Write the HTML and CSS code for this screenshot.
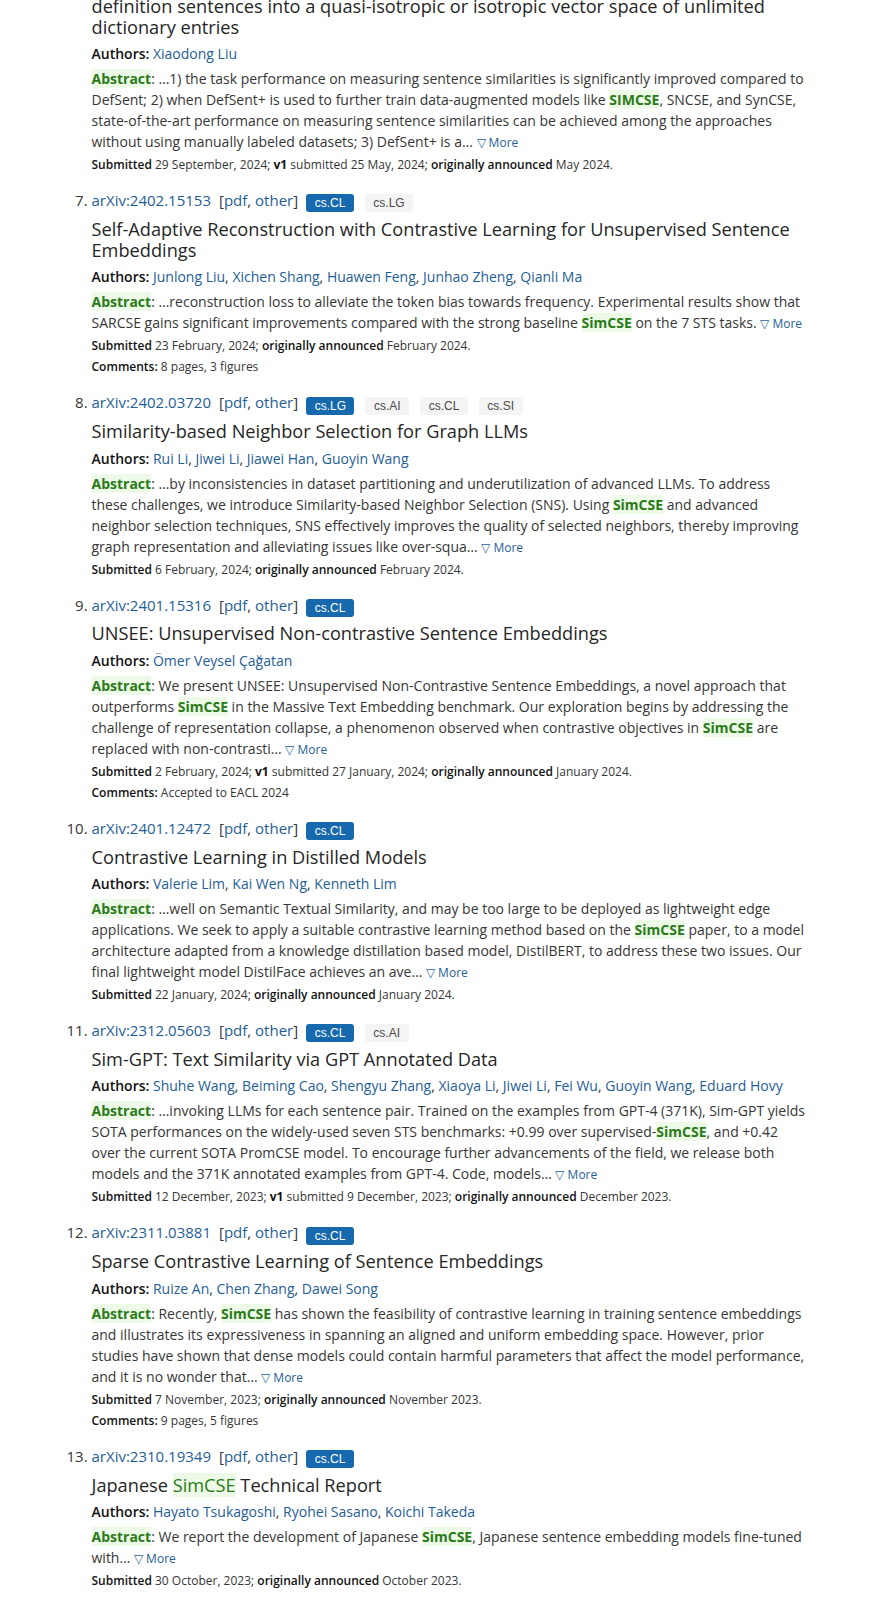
FILE: index.html
```html
<!DOCTYPE html>
<html lang="en">
<head>
<meta charset="utf-8">
<title>arXiv search results</title>
<link rel="stylesheet" href="styles.css">
</head>
<body>
<ol class="results">
  <li class="result continued" value="6">
    <p class="title first-cut">definition sentences into a quasi-isotropic or isotropic vector space of unlimited dictionary entries</p>
    <p class="authors"><span class="label">Authors:</span> <a href="#">Xiaodong Liu</a></p>
    <p class="abstract"><span class="hit">Abstract</span>: …1) the task performance on measuring sentence similarities is significantly improved compared to DefSent; 2) when DefSent+ is used to further train data-augmented models like <span class="hit">SIMCSE</span>, SNCSE, and SynCSE, state-of-the-art performance on measuring sentence similarities can be achieved among the approaches without using manually labeled datasets; 3) DefSent+ is a… <a class="more" href="#">▽ More</a></p>
    <p class="meta"><span class="label">Submitted</span> 29 September, 2024; <span class="label strong">v1</span> submitted 25 May, 2024; <span class="label">originally announced</span> May 2024.</p>
  </li>

  <li class="result" value="7">
    <p class="list-title"><a href="#">arXiv:2402.15153</a><span class="links">[<a href="#">pdf</a>, <a href="#">other</a>]</span><span class="tags"><span class="tag primary">cs.CL</span><span class="tag">cs.LG</span></span></p>
    <p class="title">Self-Adaptive Reconstruction with Contrastive Learning for Unsupervised Sentence Embeddings</p>
    <p class="authors"><span class="label">Authors:</span> <a href="#">Junlong Liu</a>, <a href="#">Xichen Shang</a>, <a href="#">Huawen Feng</a>, <a href="#">Junhao Zheng</a>, <a href="#">Qianli Ma</a></p>
    <p class="abstract"><span class="hit">Abstract</span>: …reconstruction loss to alleviate the token bias towards frequency. Experimental results show that SARCSE gains significant improvements compared with the strong baseline <span class="hit">SimCSE</span> on the 7 STS tasks. <a class="more" href="#">▽ More</a></p>
    <p class="meta"><span class="label">Submitted</span> 23 February, 2024; <span class="label">originally announced</span> February 2024.</p>
    <p class="meta"><span class="label">Comments:</span> 8 pages, 3 figures</p>
  </li>

  <li class="result" value="8">
    <p class="list-title"><a href="#">arXiv:2402.03720</a><span class="links">[<a href="#">pdf</a>, <a href="#">other</a>]</span><span class="tags"><span class="tag primary">cs.LG</span><span class="tag">cs.AI</span><span class="tag">cs.CL</span><span class="tag">cs.SI</span></span></p>
    <p class="title">Similarity-based Neighbor Selection for Graph LLMs</p>
    <p class="authors"><span class="label">Authors:</span> <a href="#">Rui Li</a>, <a href="#">Jiwei Li</a>, <a href="#">Jiawei Han</a>, <a href="#">Guoyin Wang</a></p>
    <p class="abstract"><span class="hit">Abstract</span>: …by inconsistencies in dataset partitioning and underutilization of advanced LLMs. To address these challenges, we introduce Similarity-based Neighbor Selection (SNS). Using <span class="hit">SimCSE</span> and advanced neighbor selection techniques, SNS effectively improves the quality of selected neighbors, thereby improving graph representation and alleviating issues like over-squa… <a class="more" href="#">▽ More</a></p>
    <p class="meta"><span class="label">Submitted</span> 6 February, 2024; <span class="label">originally announced</span> February 2024.</p>
  </li>

  <li class="result" value="9">
    <p class="list-title"><a href="#">arXiv:2401.15316</a><span class="links">[<a href="#">pdf</a>, <a href="#">other</a>]</span><span class="tags"><span class="tag primary">cs.CL</span></span></p>
    <p class="title">UNSEE: Unsupervised Non-contrastive Sentence Embeddings</p>
    <p class="authors"><span class="label">Authors:</span> <a href="#">Ömer Veysel Çağatan</a></p>
    <p class="abstract"><span class="hit">Abstract</span>: We present UNSEE: Unsupervised Non-Contrastive Sentence Embeddings, a novel approach that outperforms <span class="hit">SimCSE</span> in the Massive Text Embedding benchmark. Our exploration begins by addressing the challenge of representation collapse, a phenomenon observed when contrastive objectives in <span class="hit">SimCSE</span> are replaced with non-contrasti… <a class="more" href="#">▽ More</a></p>
    <p class="meta"><span class="label">Submitted</span> 2 February, 2024; <span class="label strong">v1</span> submitted 27 January, 2024; <span class="label">originally announced</span> January 2024.</p>
    <p class="meta"><span class="label">Comments:</span> Accepted to EACL 2024</p>
  </li>

  <li class="result" value="10">
    <p class="list-title"><a href="#">arXiv:2401.12472</a><span class="links">[<a href="#">pdf</a>, <a href="#">other</a>]</span><span class="tags"><span class="tag primary">cs.CL</span></span></p>
    <p class="title">Contrastive Learning in Distilled Models</p>
    <p class="authors"><span class="label">Authors:</span> <a href="#">Valerie Lim</a>, <a href="#">Kai Wen Ng</a>, <a href="#">Kenneth Lim</a></p>
    <p class="abstract"><span class="hit">Abstract</span>: …well on Semantic Textual Similarity, and may be too large to be deployed as lightweight edge applications. We seek to apply a suitable contrastive learning method based on the <span class="hit">SimCSE</span> paper, to a model architecture adapted from a knowledge distillation based model, DistilBERT, to address these two issues. Our final lightweight model DistilFace achieves an ave… <a class="more" href="#">▽ More</a></p>
    <p class="meta"><span class="label">Submitted</span> 22 January, 2024; <span class="label">originally announced</span> January 2024.</p>
  </li>

  <li class="result" value="11">
    <p class="list-title"><a href="#">arXiv:2312.05603</a><span class="links">[<a href="#">pdf</a>, <a href="#">other</a>]</span><span class="tags"><span class="tag primary">cs.CL</span><span class="tag">cs.AI</span></span></p>
    <p class="title">Sim-GPT: Text Similarity via GPT Annotated Data</p>
    <p class="authors"><span class="label">Authors:</span> <a href="#">Shuhe Wang</a>, <a href="#">Beiming Cao</a>, <a href="#">Shengyu Zhang</a>, <a href="#">Xiaoya Li</a>, <a href="#">Jiwei Li</a>, <a href="#">Fei Wu</a>, <a href="#">Guoyin Wang</a>, <a href="#">Eduard Hovy</a></p>
    <p class="abstract"><span class="hit">Abstract</span>: …invoking LLMs for each sentence pair. Trained on the examples from GPT-4 (371K), Sim-GPT yields SOTA performances on the widely-used seven STS benchmarks: +0.99 over supervised-<span class="hit">SimCSE</span>, and +0.42 over the current SOTA PromCSE model. To encourage further advancements of the field, we release both models and the 371K annotated examples from GPT-4. Code, models… <a class="more" href="#">▽ More</a></p>
    <p class="meta"><span class="label">Submitted</span> 12 December, 2023; <span class="label strong">v1</span> submitted 9 December, 2023; <span class="label">originally announced</span> December 2023.</p>
  </li>

  <li class="result" value="12">
    <p class="list-title"><a href="#">arXiv:2311.03881</a><span class="links">[<a href="#">pdf</a>, <a href="#">other</a>]</span><span class="tags"><span class="tag primary">cs.CL</span></span></p>
    <p class="title">Sparse Contrastive Learning of Sentence Embeddings</p>
    <p class="authors"><span class="label">Authors:</span> <a href="#">Ruize An</a>, <a href="#">Chen Zhang</a>, <a href="#">Dawei Song</a></p>
    <p class="abstract"><span class="hit">Abstract</span>: Recently, <span class="hit">SimCSE</span> has shown the feasibility of contrastive learning in training sentence embeddings and illustrates its expressiveness in spanning an aligned and uniform embedding space. However, prior studies have shown that dense models could contain harmful parameters that affect the model performance, and it is no wonder that… <a class="more" href="#">▽ More</a></p>
    <p class="meta"><span class="label">Submitted</span> 7 November, 2023; <span class="label">originally announced</span> November 2023.</p>
    <p class="meta"><span class="label">Comments:</span> 9 pages, 5 figures</p>
  </li>

  <li class="result" value="13">
    <p class="list-title"><a href="#">arXiv:2310.19349</a><span class="links">[<a href="#">pdf</a>, <a href="#">other</a>]</span><span class="tags"><span class="tag primary">cs.CL</span></span></p>
    <p class="title">Japanese <span class="hit">SimCSE</span> Technical Report</p>
    <p class="authors"><span class="label">Authors:</span> <a href="#">Hayato Tsukagoshi</a>, <a href="#">Ryohei Sasano</a>, <a href="#">Koichi Takeda</a></p>
    <p class="abstract"><span class="hit">Abstract</span>: We report the development of Japanese <span class="hit">SimCSE</span>, Japanese sentence embedding models fine-tuned with… <a class="more" href="#">▽ More</a></p>
    <p class="meta"><span class="label">Submitted</span> 30 October, 2023; <span class="label">originally announced</span> October 2023.</p>
  </li>
</ol>
</body>
</html>
```

FILE: styles.css
```css
* { box-sizing: border-box; }
html, body { margin: 0; padding: 0; background: #ffffff; }
body {
  font-family: "Open Sans", "Noto Sans", sans-serif;
  font-size: 14px;
  line-height: 1.5;
  color: #363636;
}
a { color: #1f5e96; text-decoration: none; }
p { margin: 0; }

.results {
  margin: 0;
  padding: 0 0 0 91.5px;
  width: 808px;
  list-style: decimal;
}
.result { margin-bottom: 15px; }
.result::marker { font-size: 15px; color: #363636; }
.result.continued { list-style: none; }

.list-title {
  font-size: 15px;
  line-height: 22.5px;
  margin-bottom: 6.5px;
}
.links { margin-left: 8px; }
.tags {
  display: inline-flex;
  gap: 11px;
  margin-left: 8px;
  vertical-align: -1.3px;
}
.tag {
  display: block;
  font-family: "Liberation Sans", Arial, sans-serif;
  font-size: 12px;
  height: 18px;
  line-height: 18px;
  padding: 0 8.5px;
  border-radius: 3px;
  background: #f4f4f4;
  color: #4a4a4a;
}
.tag.primary { background: #1669ad; color: #ffffff; }

.title {
  font-size: 18.2px;
  line-height: 21px;
  font-weight: 400;
  color: #262626;
  margin-bottom: 5.5px;
}
.first-cut { margin-top: -4.5px; }

.authors { margin-bottom: 4px; }
.label { font-weight: 600; color: #121212; }
.label.strong { font-weight: 700; }
.abstract { margin-bottom: 4px; }
.hit { background: #ecfae7; color: #2b7a1a; font-weight: 700; }
.title .hit { font-weight: 400; }
.more { font-size: 12px; }
.meta { font-size: 12px; line-height: 18px; margin-bottom: 3px; }
```
